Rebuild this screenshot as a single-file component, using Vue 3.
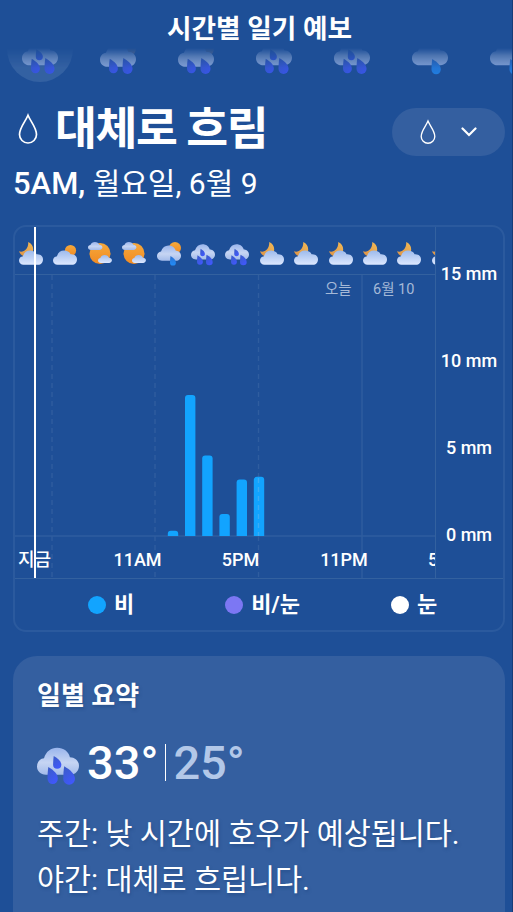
<script setup>
import { computed } from 'vue'

const hours = ['rain', 'moonrain', 'moonrain', 'rain', 'rain', 'drizzle', 'drizzle']

const icons = [
    'night', 'day', 'sunny', 'sunny', 'shower', 'rain', 'rain',
    'night', 'night', 'night', 'night', 'night', 'night',
]

const scale = ['15 mm', '10 mm', '5 mm', '0 mm']

const legend = [
    { label: '비', color: '#12a4ff' },
    { label: '비/눈', color: '#7c77f3' },
    { label: '눈', color: '#ffffff' },
]

const ticks = [
    { label: '지금', x: 19.5, anchor: 'middle' },
    { label: '11AM', x: 122.5, anchor: 'middle' },
    { label: '5PM', x: 225.5, anchor: 'middle' },
    { label: '11PM', x: 329, anchor: 'middle' },
    { label: '5AM', x: 413, anchor: 'start' },
]

const rain = [0.3, 8.1, 4.63, 1.27, 3.25, 3.4]
const base = 261
const unit = 17.4

// rounded top, flat bottom
const bars = computed(() => rain.map((mm, i) => {
    const x = 152.8 + i * 17.2
    const y = base - mm * unit
    return `M${x} ${base}V${y + 3}q0 -3 3 -3h4.4q3 0 3 3V${base}z`
}))
</script>

<template>

  <div class="page">

    <svg class="defs" width="0" height="0">
        <defs>
            <linearGradient id="cloud" x1="0" y1="0" x2="0" y2="1">
                <stop offset="0" stop-color="#9dbaec" />
                <stop offset=".5" stop-color="#bdd1f5" />
                <stop offset="1" stop-color="#dde8ff" />
            </linearGradient>
            <linearGradient id="wet" x1="0" y1="0" x2="0" y2="1">
                <stop offset="0" stop-color="#9ab5ec" />
                <stop offset=".55" stop-color="#c6d5f3" />
                <stop offset="1" stop-color="#a3bbea" />
            </linearGradient>
            <linearGradient id="moon" x1="1" y1="0" x2="0" y2="1">
                <stop offset="0" stop-color="#f3ba55" />
                <stop offset="1" stop-color="#dc9247" />
            </linearGradient>
            <linearGradient id="sun" x1="0" y1="0" x2="0" y2="1">
                <stop offset="0" stop-color="#f5a93c" />
                <stop offset="1" stop-color="#f18a22" />
            </linearGradient>
            <linearGradient id="drop" x1="0" y1="0" x2=".6" y2="1">
                <stop offset="0" stop-color="#3a5cc4" />
                <stop offset="1" stop-color="#4058fb" />
            </linearGradient>
            <linearGradient id="light" x1="0" y1="0" x2="0" y2="1">
                <stop offset="0" stop-color="#2d72d3" />
                <stop offset="1" stop-color="#218cf7" />
            </linearGradient>

            <path id="puff" d="M4 6C5.200 2 8 0 11.500 0C15.200 0 18 2.200 18.800 5.300C21.800 5.300 24 7.500 24 10.200C24 13 22 15.300 19 15.300H5C2 15.300 0 13.200 0 10.600C0 8.200 1.700 6.200 4 6Z" />
            <path id="low" d="M4 14.200C5 10.300 7.800 8.500 11 8.500C14 8.500 16.500 9.700 17.600 12.200C21.500 11.800 24 14.200 24 17.200C24 20.700 22 22.800 19 22.800H4.500C2 22.800 0 20.800 0 18.500C0 16.200 1.700 14.400 4 14.200Z" />
            <path id="tear" d="M.500 0C3.800 2 6.200 4.200 6.200 7A3.100 3.100 0 0 1 0 7C0 4.500 .200 2 .500 0Z" />

            <symbol id="night" viewBox="0 0 24 24">
                <path fill="url(#moon)" d="M9.200 0C14.500 2.200 15.800 8.500 12 12.500C8.500 16.200 1.800 14.800 0 9.300C4.800 11 9.800 6.500 9.200 0Z" />
                <use href="#low" fill="url(#cloud)" />
            </symbol>
            <symbol id="day" viewBox="0 0 24 24">
                <circle cx="17.500" cy="8.500" r="5.600" fill="url(#sun)" />
                <use href="#low" fill="url(#cloud)" />
            </symbol>
            <symbol id="sunny" viewBox="0 0 24 24">
                <circle cx="12" cy="11.500" r="10.500" fill="url(#sun)" />
                <use href="#puff" fill="url(#wet)" transform="translate(0 0) scale(.6 .52)" />
                <use href="#puff" fill="url(#cloud)" transform="translate(10 13) scale(.58 .52)" />
            </symbol>
            <symbol id="shower" viewBox="0 0 24 24">
                <circle cx="18" cy="6" r="6" fill="url(#sun)" />
                <use href="#puff" fill="url(#wet)" transform="translate(0 3.500)" />
                <use href="#tear" fill="url(#light)" transform="translate(13 14) scale(.95)" />
            </symbol>
            <symbol id="rain" viewBox="0 0 24 24">
                <g transform="translate(0 2.200)">
                    <use href="#puff" fill="url(#wet)" />
                    <use href="#tear" fill="url(#drop)" transform="translate(9.200 4.600) scale(.76 .73)" />
                    <use href="#tear" fill="url(#drop)" transform="translate(6 11) scale(.95)" />
                    <use href="#tear" fill="url(#drop)" transform="translate(15 10.500) scale(1.080 1.050)" />
                </g>
            </symbol>
            <symbol id="moonrain" viewBox="0 0 24 24">
                <g transform="translate(0 2.200)">
                    <path fill="#a98c78" d="M18 2L23.700 2C24.500 5 23.500 8 21 9L17 8Z" />
                    <use href="#puff" fill="url(#wet)" transform="translate(0 1)" />
                    <use href="#tear" fill="url(#drop)" transform="translate(6 11) scale(.95)" />
                    <use href="#tear" fill="url(#drop)" transform="translate(15 10.500) scale(1.080 1.050)" />
                </g>
            </symbol>
            <symbol id="drizzle" viewBox="0 0 24 24">
                <g transform="translate(0 2.200)">
                    <use href="#puff" fill="url(#wet)" />
                    <use href="#tear" fill="url(#light)" transform="translate(13 11.200)" />
                </g>
            </symbol>
            <symbol id="water" viewBox="0 0 20 32">
                <path d="M10 2.300C12.500 8.500 18.500 14.500 18.500 21.500A8.500 8.500 0 0 1 1.500 21.500C1.500 14.500 7.500 8.500 10 2.300Z" fill="none" stroke="#fff" stroke-width="1.700" />
            </symbol>
        </defs>
    </svg>

    <header class="header">시간별 일기 예보</header>

    <div class="strip">
        <div v-for="(icon, i) in hours" :key="i" class="hour" :class="{ active: i === 0 }">
            <svg width="36" height="36"><use :href="'#' + icon" /></svg>
        </div>
    </div>

    <div class="heading">
        <svg class="water" width="20" height="32"><use href="#water" /></svg>
        <h1>대체로 흐림</h1>
        <button class="picker">
            <svg width="16" height="26"><use href="#water" /></svg>
            <svg width="16" height="10" viewBox="0 0 16 10">
                <path d="M1.500 1.500L8 8L14.500 1.500" fill="none" stroke="#fff" stroke-width="2.200" stroke-linecap="round" />
            </svg>
        </button>
    </div>

    <div class="date"><b>5AM,</b> 월요일, 6월 9</div>

    <section class="chart">

        <div class="graph">

            <div class="plot">
                <div class="icons">
                    <svg v-for="(icon, i) in icons" :key="i" width="24" height="24"><use :href="'#' + icon" /></svg>
                </div>
                <svg class="bars" width="420" height="303">
                    <g class="grid">
                        <path d="M0 261H420" />
                        <path d="M347 0V303" />
                        <path class="dashed" d="M37 0V303M140 0V303M243.500 0V303" />
                    </g>
                    <path v-for="(d, i) in bars" :key="i" :d="d" fill="#12a4ff" />
                    <path class="dashed over" d="M243.500 203V261" />
                    <text class="day" x="310" y="19">오늘</text>
                    <text class="day" x="358" y="19">6월 10</text>
                    <text v-for="t in ticks" :key="t.x" class="tick" :x="t.x" y="291" :text-anchor="t.anchor">{{ t.label }}</text>
                </svg>
                <div class="now"></div>
            </div>

            <div class="scale">
                <span v-for="s in scale" :key="s">{{ s }}</span>
            </div>

        </div>

        <div class="legend">
            <div v-for="l in legend" :key="l.label" class="item">
                <i :style="{ background: l.color }"></i><span>{{ l.label }}</span>
            </div>
        </div>

    </section>

    <section class="summary">
        <h2>일별 요약</h2>
        <div class="temps">
            <svg width="42" height="42"><use href="#rain" /></svg>
            <span class="high">33°</span>
            <span class="low">25°</span>
        </div>
        <p>주간: 낮 시간에 호우가 예상됩니다.</p>
        <p>야간: 대체로 흐립니다.</p>
    </section>

  </div>

</template>

<style>
body { margin: 0; background: #1e4f97; overflow: hidden; }
</style>

<style scoped>

.page {
    box-sizing: border-box;
    width: 513px; height: 912px;
    overflow: hidden;
    background: #1e4f97;
    border-right: 1px solid #163c78;
    color: #fff;
    font-family: Roboto, 'Noto Sans CJK KR', sans-serif;
}
.defs { display: block; }

.header { height: 48px; padding-left: 7px; line-height: 59px; text-align: center; font-size: 26.7px; font-weight: 700; box-sizing: border-box; }

.strip {
    display: flex;
    align-items: flex-end;
    gap: 12px;
    height: 34px;
    padding-left: 7px;
    overflow: hidden;
    opacity: .75;
    mask-image: linear-gradient(transparent, #000 20px);
}
.hour { display: flex; flex: none; box-sizing: border-box; width: 66px; height: 66px; padding: 23px 15px 0; border-radius: 50%; }
.hour.active { background: #3b67a6; }

.heading { display: flex; align-items: center; height: 48px; margin-top: 25.5px; padding: 0 7px 0 18px; }
.heading h1 { margin: 0 0 0 17px; font-size: 45.5px; font-weight: 700; line-height: 48px; letter-spacing: -1.4px; position: relative; top: -2px; }
.water { margin-top: -6px; }
.picker {
    display: flex;
    align-items: center;
    gap: 25px;
    box-sizing: border-box;
    width: 113px; height: 48px;
    margin-left: auto;
    padding: 0 0 0 28px;
    border: 0;
    border-radius: 24px;
    background: #345fa0;
}

.date { height: 44px; margin: 5.5px 0 20px 13px; line-height: 46px; font-size: 30px; }
.date b { font-size: 31px; font-weight: 500; }

.chart { box-sizing: border-box; width: 492px; height: 407px; margin-left: 13px; border: 2px solid #2b5a9e; border-radius: 13px; overflow: hidden; }
.graph { display: flex; height: 351px; border-bottom: 1px solid #33619f; }
.plot { position: relative; width: 420px; overflow: hidden; }
.icons { display: flex; gap: 10.4px; box-sizing: border-box; height: 48px; padding: 15px 0 0 4px; border-bottom: 1px solid #33619f; }
.icons svg { flex: none; }
.bars { display: block; }
.grid { stroke: #2f5d9f; stroke-width: 1.4; fill: none; }
.dashed { stroke-dasharray: 5 4; }
.over { stroke: #3bacf5; stroke-width: 1.4; }
.day { font-size: 14.5px; fill: #a5b9d7; }
.tick { font-size: 18px; font-weight: 500; fill: #fff; }
.now { position: absolute; left: 19px; top: 0; width: 2px; height: 100%; background: #fff; }

.scale {
    display: flex;
    flex: 1;
    flex-direction: column;
    justify-content: space-between;
    align-items: center;
    padding: 36px 1px 32px 0;
    border-left: 1px solid #33619f;
    font-size: 18px; font-weight: 500;
    line-height: 22px;
}

.legend { display: flex; align-items: center; height: 51px; padding-left: 73px; font-size: 22px; font-weight: 500; }
.item { display: flex; align-items: center; gap: 8px; white-space: nowrap; }
.item i { width: 18px; height: 18px; border-radius: 50%; }
.item span { font-weight: 700; line-height: 30px; }
.item + .item { margin-left: 91px; }

.summary {
    box-sizing: border-box;
    width: 492px; height: 300px;
    margin: 24px 0 0 13px;
    padding: 21px 24px;
    border-radius: 24px;
    background: #345fa0;
    text-shadow: 1px 2px 3px #1e447c80;
}
.summary h2 { margin: 0; font-size: 26px; font-weight: 700; line-height: 38px; }
.temps { display: flex; align-items: center; height: 56px; margin: 19px 0 21px; font-size: 47px; font-weight: 500; text-shadow: none; }
.temps svg { margin-top: 5px; }
.high { margin-left: 8px; padding-right: 7px; border-right: 1px solid #fff; line-height: 37px; }
.low { margin-left: 7px; color: #b3c8e8; }
.summary p { margin: 0; font-size: 29.4px; line-height: 46px; white-space: nowrap; }

</style>
